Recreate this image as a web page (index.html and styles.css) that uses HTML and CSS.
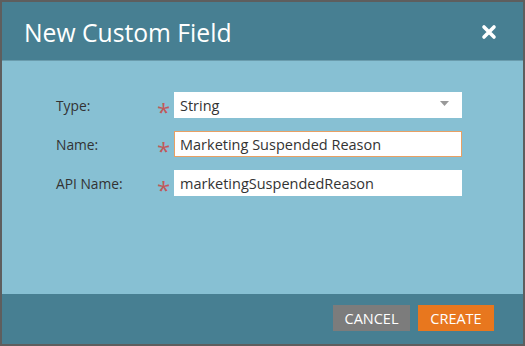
FILE: index.html
```html
<!DOCTYPE html>
<html>
<head>
<meta charset="utf-8">
<link rel="stylesheet" href="styles.css">
</head>
<body>
<div class="modal">
  <div class="header">
    <h1 class="title">New Custom Field</h1>
    <svg class="close" width="16" height="16" viewBox="0 0 16 16"><path d="M3 3 L13 13 M13 3 L3 13" stroke="#fff" stroke-width="3.6" stroke-linecap="round"/></svg>
  </div>
  <div class="content">
    <div class="row">
      <span class="label">Type:</span>
      <span class="star">*</span>
      <div class="field select"><span>String</span><svg class="caret" width="9" height="5" viewBox="0 0 9 5"><path d="M0 0 H9 L4.5 5 Z" fill="#999"/></svg></div>
    </div>
    <div class="row">
      <span class="label">Name:</span>
      <span class="star">*</span>
      <div class="field focus"><span>Marketing Suspended Reason</span></div>
    </div>
    <div class="row">
      <span class="label">API Name:</span>
      <span class="star">*</span>
      <div class="field"><span>marketingSuspendedReason</span></div>
    </div>
  </div>
  <div class="footer">
    <button class="btn cancel">CANCEL</button>
    <button class="btn create">CREATE</button>
  </div>
</div>
</body>
</html>
```
FILE: styles.css
```css
html, body {
  margin: 0;
  padding: 0;
}
body {
  background: #5e5e5e;
  padding: 2px;
  width: 521px;
  height: 342px;
  font-family: "Open Sans", "DejaVu Sans", sans-serif;
}
.modal {
  display: flex;
  flex-direction: column;
  height: 342px;
}
.header {
  background: #477f92;
  border-bottom: 1px solid #6a9cad;
  display: flex;
  align-items: center;
  justify-content: space-between;
  padding: 0 26px 0 22px;
  box-sizing: border-box;
  height: 59px;
}
.title {
  margin: 0;
  font-weight: 400;
  font-size: 24.7px;
  color: #fff;
  padding-top: 2px;
}
.close {
  margin-top: 2px;
}
.content {
  flex: 1;
  background: #87c0d3;
  padding: 31px 0 0 54px;
  display: flex;
  flex-direction: column;
  gap: 13px;
}
.row {
  display: flex;
  align-items: center;
  height: 26px;
}
.label {
  width: 101px;
  font-size: 13.8px;
  color: #333;
  padding-top: 1px;
}
.star {
  width: 17px;
  color: #c1595a;
  font-size: 24px;
  line-height: 1;
  padding-top: 8px;
  height: 26px;
  box-sizing: border-box;
  padding-left: 0;
}
.field {
  width: 288px;
  height: 26px;
  box-sizing: border-box;
  background: #fff;
  border: 1px solid #fff;
  display: flex;
  align-items: center;
  justify-content: space-between;
  padding: 0 12px 0 5px;
  font-size: 14.5px;
  color: #333;
}
.field.focus {
  border-color: #e8a064;
}
.caret {
  margin-top: -3px;
}
.footer {
  height: 50px;
  background: #477f92;
  display: flex;
  justify-content: flex-end;
  align-items: flex-start;
  gap: 8px;
  padding: 11px 29px 0 0;
  box-sizing: border-box;
}
.btn {
  height: 26px;
  border: 0;
  color: #fff;
  font-family: "Open Sans", "DejaVu Sans", sans-serif;
  font-size: 14.5px;
  padding: 0;
  margin: 0;
}
.cancel {
  width: 77px;
  background: #7c7c7c;
}
.create {
  width: 76px;
  background: #e8771e;
}
```
